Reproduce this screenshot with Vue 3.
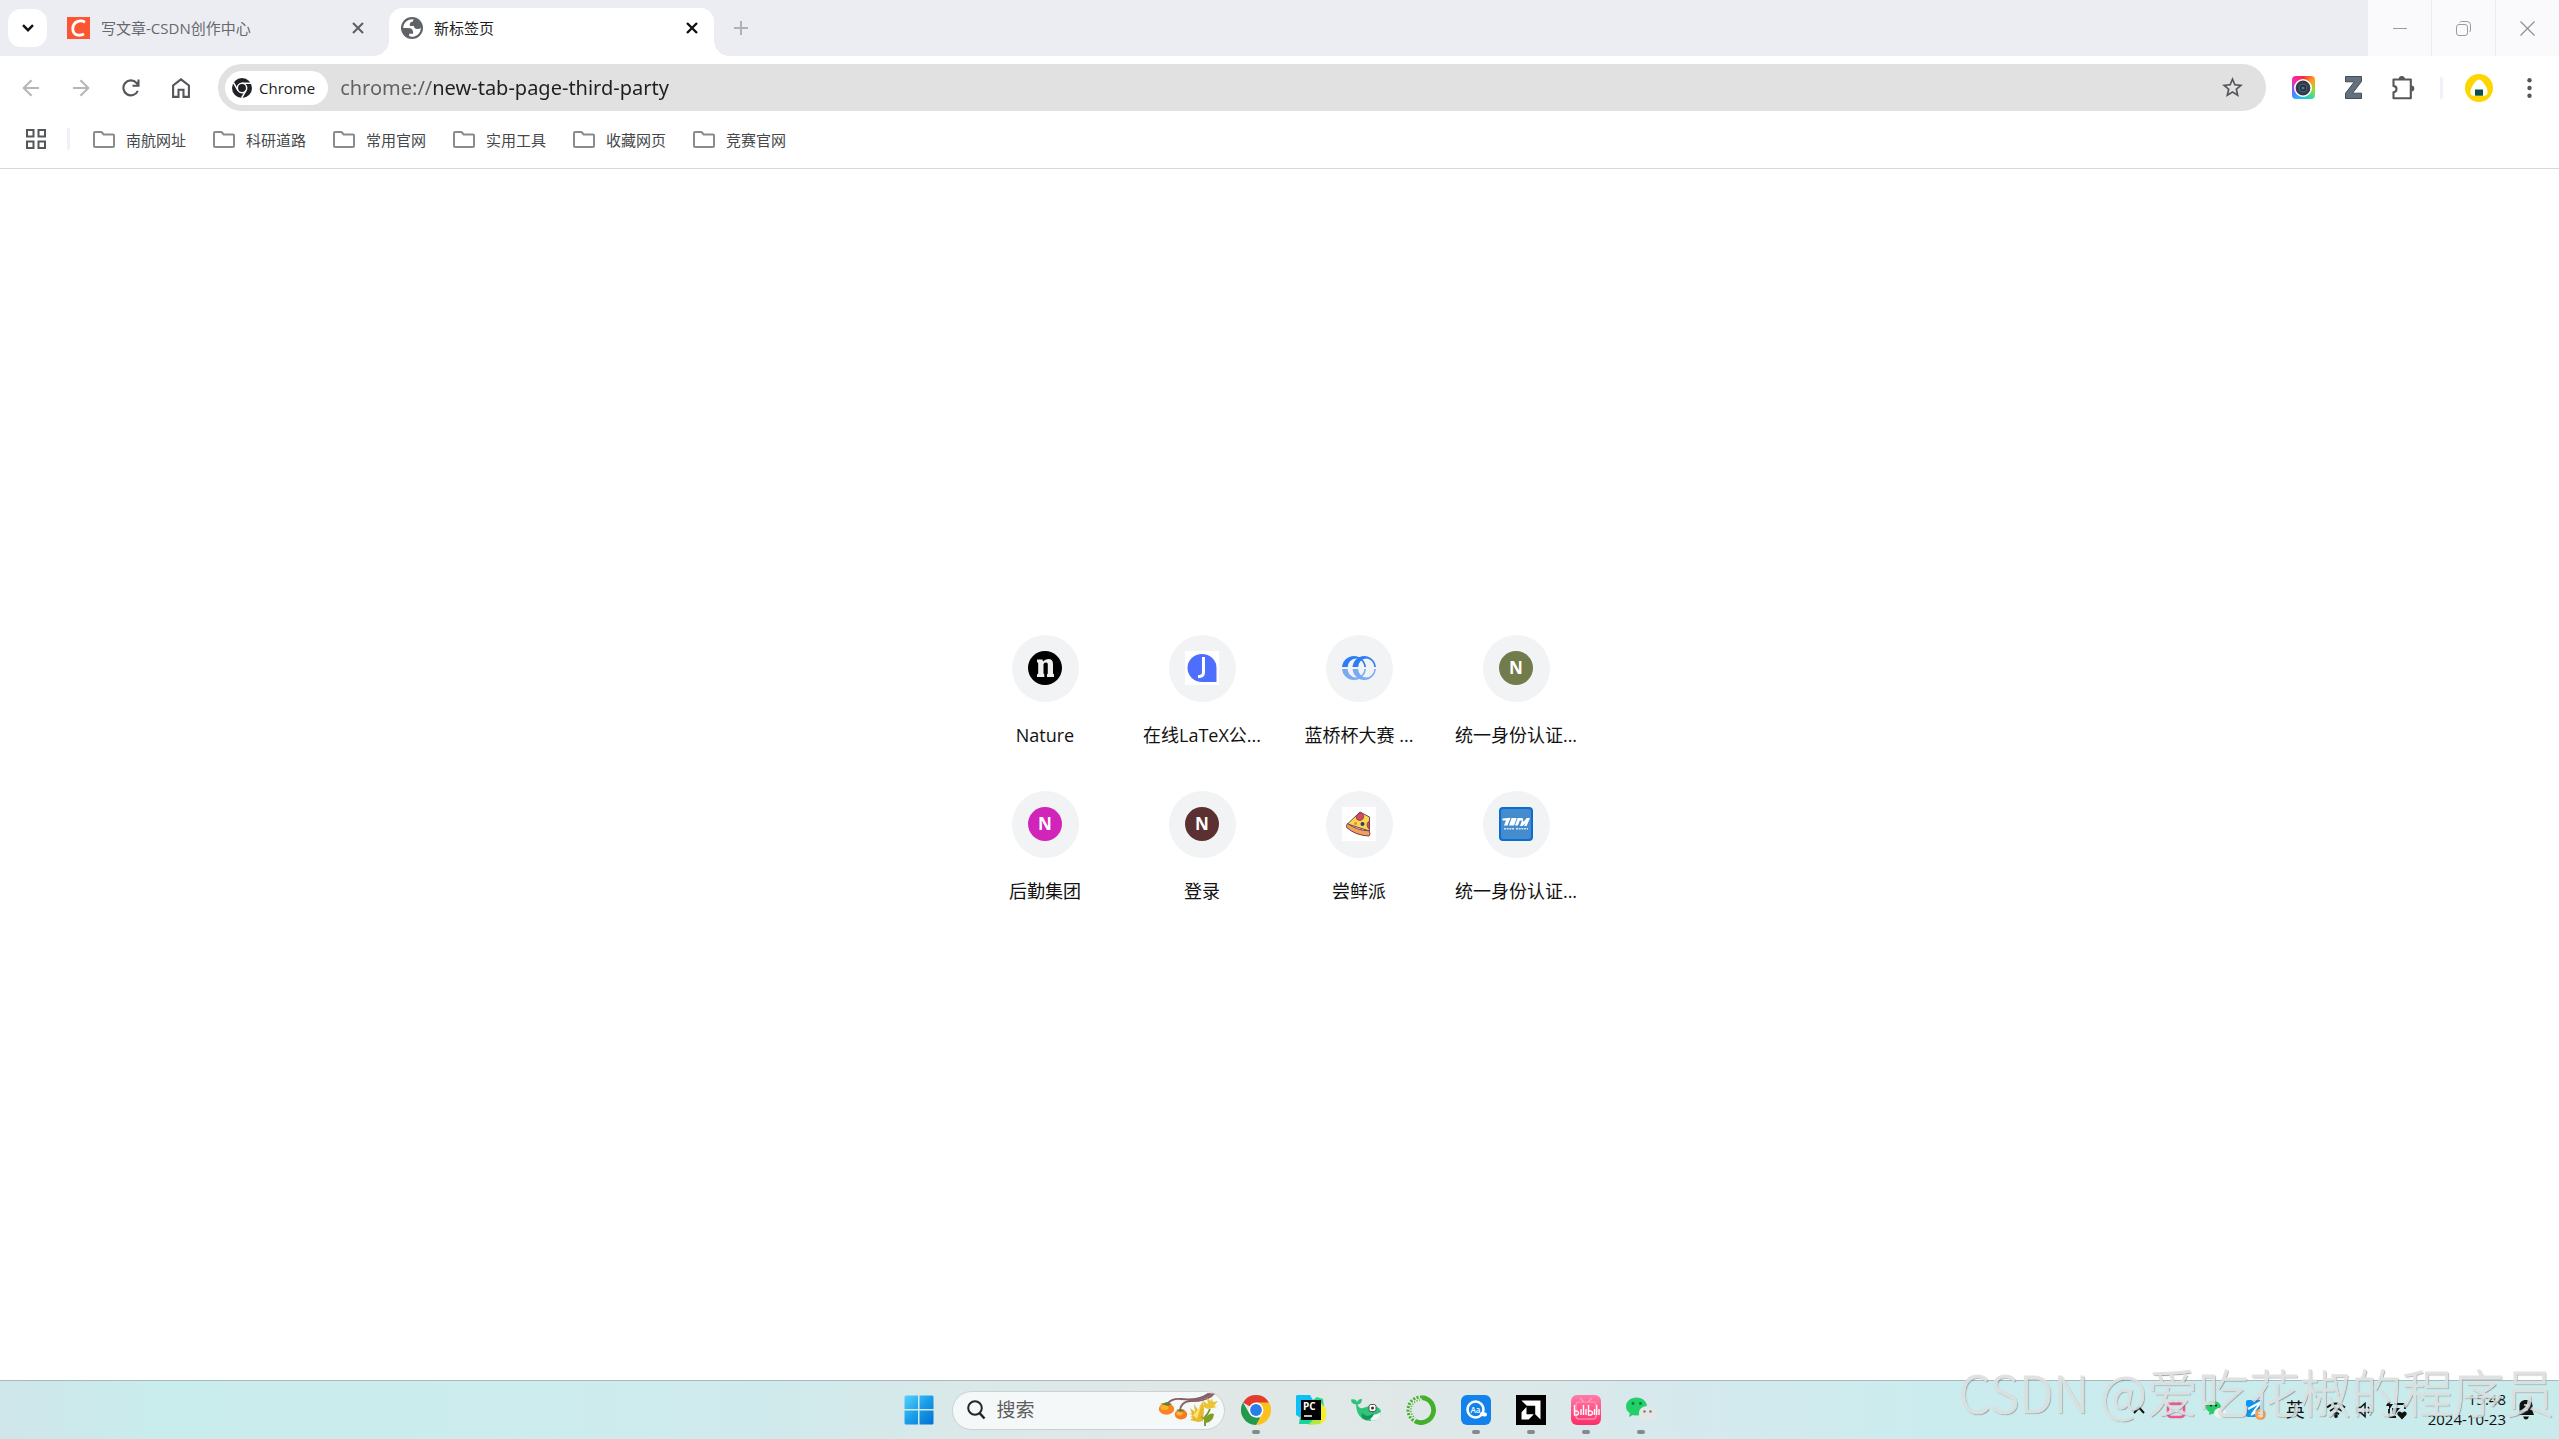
<script setup>
import { ref } from 'vue'

const address = ref('chrome://new-tab-page-third-party')
const folders = ['南航网址', '科研道路', '常用官网', '实用工具', '收藏网页', '竞赛官网']
const shortcuts = [
  { label: 'Nature', icon: 'nature' },
  { label: '在线LaTeX公...', icon: 'latex' },
  { label: '蓝桥杯大赛 ...', icon: 'rings' },
  { label: '统一身份认证...', icon: 'letter', color: '#717b4b' },
  { label: '后勤集团', icon: 'letter', color: '#d025b8' },
  { label: '登录', icon: 'letter', color: '#5b3030' },
  { label: '尝鲜派', icon: 'pizza' },
  { label: '统一身份认证...', icon: 'campus' },
]
</script>

<template>
  <div class="screen">
    <header class="tabstrip">
      <button class="tab-search" aria-label="Search tabs">
        <svg width="12" height="8" viewBox="0 0 12 8"><path d="M1 1.2 6 6.2 11 1.2" fill="none" stroke="#111" stroke-width="2.4" /></svg>
      </button>
      <div class="tab">
        <svg width="23" height="22" viewBox="0 0 23 22">
          <rect width="23" height="22" fill="#fc5531" />
          <path d="M18 5.2C13.500 2.600 6 4.200 5.800 11.700c-.1 6.200 6.200 8 11.200 5.300" fill="none" stroke="#fff" stroke-width="2.800" />
        </svg>
        <span class="tab-title">写文章-CSDN创作中心</span>
        <button class="close" aria-label="Close tab">
          <svg width="12" height="12" viewBox="0 0 12 12"><path d="m1 1 10 10M11 1 1 11" stroke="#5c5e62" stroke-width="2" /></svg>
        </button>
      </div>
      <div class="tab active">
        <svg width="22" height="22" viewBox="2 2 20 20"><circle cx="12" cy="12" r="10" fill="#5f6368" /><path fill="#fff" d="M4 12h4.400c3.407.022 4.922 1.730 4.543 5.127H9.488v2.470a8.004 8.004 0 0 0 10.498-8.083C19.327 12.504 18.332 13 17 13c-2.137 0-3.206-.916-3.206-2.750h-3.748c-.274-2.728.683-4.092 2.870-4.092 0-.975.327-1.597.811-1.970A8.004 8.004 0 0 0 4 12z" /></svg>
        <span class="tab-title">新标签页</span>
        <button class="close" aria-label="Close tab">
          <svg width="12" height="12" viewBox="0 0 12 12"><path d="m1 1 10 10M11 1 1 11" stroke="#111" stroke-width="2.400" /></svg>
        </button>
      </div>
      <button class="new-tab" aria-label="New tab">
        <svg width="14" height="14" viewBox="0 0 14 14"><path d="M7 0v14M0 7h14" stroke="#b0b1b5" stroke-width="2" /></svg>
      </button>
      <div class="window-controls">
        <button aria-label="Minimize"><svg width="14" height="14" viewBox="0 0 14 14"><path d="M0 7.500h14" stroke="#9a9a9c" /></svg></button>
        <button aria-label="Restore"><svg width="15" height="15" viewBox="0 0 15 15" fill="none" stroke="#9a9a9c"><rect x=".5" y="3.500" width="11" height="11" rx="2.500" /><path d="M3.500 1.500q.7-1 2-1H11a3.500 3.500 0 0 1 3.500 3.500v5q0 1.300-1 2" /></svg></button>
        <button aria-label="Close"><svg width="15" height="15" viewBox="0 0 15 15"><path d="m.5.5 14 14M14.500.5l-14 14" stroke="#8f8f91" stroke-width="1.200" /></svg></button>
      </div>
    </header>

    <nav class="toolbar">
      <button class="tool" aria-label="Back"><svg width="18" height="18" viewBox="0 0 18 18"><path d="M17 9H2M9.500 1.200 1.700 9l7.800 7.800" fill="none" stroke="#b6b6b8" stroke-width="2" /></svg></button>
      <button class="tool" aria-label="Forward"><svg width="18" height="18" viewBox="0 0 18 18"><path d="M1 9h15M8.500 1.200 16.300 9l-7.800 7.800" fill="none" stroke="#b6b6b8" stroke-width="2" /></svg></button>
      <button class="tool" aria-label="Reload"><svg width="18" height="18" viewBox="0 0 18 18"><path d="M15.800 11.800A7.500 7.500 0 1 1 14.600 4L16 5.800M16.500.5v6.200h-6" fill="none" stroke="#555659" stroke-width="2.100" /></svg></button>
      <button class="tool" aria-label="Home"><svg width="18" height="20" viewBox="0 0 18 20"><path d="M1.100 18.900V7.500L9 1.300l7.900 6.200v11.400h-5.400v-7.200h-5v7.200z" fill="none" stroke="#555659" stroke-width="2.100" /></svg></button>
      <div class="omnibox">
        <span class="chip">
          <svg width="20" height="20" viewBox="0 0 20 20">
            <circle cx="10" cy="10" r="10" fill="#1f2125" />
            <circle cx="10" cy="10" r="4.700" fill="none" stroke="#fff" stroke-width="1.500" />
            <path d="M10 5.300h9M5.900 12.300 1.500 4.600M14 12.400l-4.400 7.600" stroke="#fff" stroke-width="1.500" />
          </svg>
          Chrome
        </span>
        <input v-model="address" class="address" aria-label="Address" spellcheck="false">
        <button class="star" aria-label="Bookmark this tab"><svg width="25" height="25" viewBox="0 0 24 24"><path fill="#555659" d="M22 9.240l-7.190-.62L12 2 9.190 8.630 2 9.240l5.460 4.730L5.820 21 12 17.270 18.180 21l-1.630-7.030zM12 15.400l-3.760 2.270 1-4.280-3.320-2.880 4.380-.38L12 6.100l1.710 4.040 4.380.38-3.320 2.880 1 4.280z" /></svg></button>
      </div>
      <button class="tool" aria-label="Screenshot extension">
        <span class="camera"><svg width="18" height="18" viewBox="0 0 18 18"><circle cx="9" cy="9" r="8.200" fill="#343b47" stroke="#fff" stroke-width="1.600" /><circle cx="9" cy="9" r="4" fill="#24303e" stroke="#536071" /><circle cx="9" cy="9" r="1.600" fill="#397ea0" /></svg></span>
      </button>
      <button class="tool" aria-label="Zotero"><svg width="17" height="23" viewBox="0 0 17 23"><path d="M.5.500h16v5L7.500 17.200h9v5.300H.5v-5.200L9.300 5.800H.5z" fill="#64717d" stroke="#434d57" /></svg></button>
      <button class="tool" aria-label="Extensions"><svg width="24" height="24" viewBox="0 0 24 24"><path d="M2.500 3.500h17.300v18.800H2.500v-6q3-.4 3-3.200t-3-3.200z" fill="none" stroke="#555659" stroke-width="2.100" stroke-linejoin="round" /><path d="M7.800 3a3 3 0 0 1 6 0zM20.300 9.600a3 3 0 0 1 0 6z" fill="#555659" /></svg></button>
      <span class="divider"></span>
      <button class="tool" aria-label="Profile"><svg width="28" height="28" viewBox="0 0 28 28"><circle cx="14" cy="14" r="14" fill="#ffd500" /><path d="M14 5.500c3.600 0 9.200 9.400 8.600 13.200-.4 2.300-1.700 3-3.600 3H9c-2 0-3.200-.7-3.600-3C4.800 15 10.400 5.500 14 5.500z" fill="#fff" /><path d="M10 15.500h8v6.200h-8z" fill="#075246" /></svg></button>
      <button class="tool" aria-label="Menu"><svg width="5" height="20" viewBox="0 0 5 20" fill="#555659"><circle cx="2.500" cy="2.300" r="2.200" /><circle cx="2.500" cy="10" r="2.200" /><circle cx="2.500" cy="17.700" r="2.200" /></svg></button>
    </nav>

    <nav class="bookmarks">
      <button class="apps" aria-label="Apps"><svg width="20" height="20" viewBox="0 0 20 20" fill="none" stroke="#555659" stroke-width="2"><path d="M1 1h6.500v6.500H1zM12.500 1H19v6.500h-6.500zM1 12.500h6.500V19H1zM12.500 12.500H19V19h-6.500z" /></svg></button>
      <span class="divider"></span>
      <button v-for="name in folders" :key="name" class="folder">
        <svg width="22" height="17" viewBox="0 0 22 17"><path d="M1 15V2q0-1 1-1h6.500l2.200 2.500H20q1 0 1 1V15q0 1-1 1H2q-1 0-1-1z" fill="none" stroke="#8a8b8d" stroke-width="2" /></svg>
        {{ name }}
      </button>
    </nav>

    <main class="page">
      <div class="tiles">
        <a v-for="(s, i) in shortcuts" :key="i" href="#" class="tile">
          <span class="disc">
            <svg width="34" height="34" viewBox="0 0 34 34">
              <template v-if="s.icon === 'nature'">
                <circle cx="17" cy="17" r="17" fill="#000" />
                <path d="M9 8.500h5.500l.5 2q2.200-2.500 5.200-2.500c3.300 0 4.800 1.800 4.800 5v9.500l1 1V26h-7v-2.500l.8-1V13.800c0-1.500-.5-2.200-1.700-2.200-1 0-1.900.5-2.600 1.300v9.600l.8 1V26H9v-2.500l1.200-1V12L9 11z" fill="#eee" />
              </template>
              <template v-else-if="s.icon === 'latex'">
                <rect width="34" height="34" fill="#fff" />
                <path d="M17 3a14.500 14 0 0 1 14.500 14v14H17a14.500 14 0 0 1 0-28z" fill="#4e6eff" />
                <path d="M18.500 6v15.500q0 4-5.500 4.200" fill="none" stroke="#fff" stroke-width="3" />
              </template>
              <template v-else-if="s.icon === 'rings'">
                <defs>
                  <linearGradient id="rings" gradientUnits="userSpaceOnUse" x1="0" y1="4" x2="0" y2="30">
                    <stop offset="0" stop-color="#2f7df2" /><stop offset=".46" stop-color="#2f7df2" />
                    <stop offset=".46" stop-color="#f1f3f4" /><stop offset=".54" stop-color="#f1f3f4" />
                    <stop offset=".54" stop-color="#78aaf5" /><stop offset="1" stop-color="#78aaf5" />
                  </linearGradient>
                </defs>
                <path fill="url(#rings)" fill-rule="evenodd" d="M0 17a12 12 0 0 1 24 0a12 12 0 0 1-24 0zM5.500 17a8.500 9.500 0 0 0 17 0a8.500 9.500 0 0 0-17 0z" />
                <path fill="url(#rings)" fill-rule="evenodd" d="M10.500 17a11.700 12 0 0 1 23.400 0a11.700 12 0 0 1-23.400 0zM16 17a8.200 9.500 0 0 0 16.400 0a8.200 9.500 0 0 0-16.400 0z" />
              </template>
              <template v-else-if="s.icon === 'letter'">
                <circle cx="17" cy="17" r="17" :fill="s.color" />
                <text x="17" y="23" text-anchor="middle" class="initial">N</text>
              </template>
              <template v-else-if="s.icon === 'pizza'">
                <rect width="34" height="34" fill="#fff" />
                <path d="M5.500 17 18 5l9.500 5v14z" fill="#fbd64d" stroke="#70405c" />
                <path d="M14 9.500Q18 3 21.500 8q1 4.500-3.500 5.500-4 0-4-4zM27.500 14q-4 2-1.500 7l1.500 1z" fill="#d9485c" stroke="#70405c" stroke-width=".8" />
                <path d="M5.500 16.500Q15 23.500 27 23.800q2 2.700 0 5.200Q14 28.500 4.800 20.700q-.8-2.700.7-4.200z" fill="#f2a057" stroke="#70405c" />
                <circle cx="20.500" cy="17" r="2" fill="#333d66" />
                <circle cx="13.500" cy="16.500" r="1.500" fill="#e8883c" />
              </template>
              <template v-else>
                <rect x="1" y="1" width="32" height="32" rx="3" fill="#448ccb" stroke="#0b6dcf" stroke-width="2" />
                <path d="m3.500 11.500 8-.7-3 7.700H5l2-5H3.500zM12.500 11h5.300l-2.800 7.500h-5zM18.700 11h5l-1 2.500-2 .2-1.800 4.800H16zM23.800 11l.6 4 3.300-4H31l-3.400 8h-2.500l1.400-3-3 3H21z" fill="#fff" />
                <path d="M5 21.700h10M17 21.700h12" stroke="#d5e6f5" stroke-width="1.600" stroke-dasharray="2 .7" />
              </template>
            </svg>
          </span>
          <span class="tile-label">{{ s.label }}</span>
        </a>
      </div>
    </main>

    <footer class="taskbar">
      <div class="dock">
        <button class="app" aria-label="Start">
          <svg width="30" height="30" viewBox="0 0 30 30">
            <defs><linearGradient id="win" x1="0" y1="0" x2="1" y2="1"><stop offset="0" stop-color="#56d2ff" /><stop offset=".5" stop-color="#1a9de8" /><stop offset="1" stop-color="#0070d2" /></linearGradient></defs>
            <path d="M2 .5h12V14H.5V2Q.5.5 2 .5zM15.500.5H28q1.500 0 1.500 1.500v12h-14zM.5 15.500H14v14H2Q.5 29.500.5 28zM15.500 15.500h14V28q0 1.500-1.500 1.500H15.500z" fill="url(#win)" />
          </svg>
        </button>
        <label class="search">
          <svg width="19" height="20" viewBox="0 0 19 20"><circle cx="8" cy="8" r="6.800" fill="none" stroke="#252525" stroke-width="2" /><path d="m12.500 13 5 5.500" stroke="#252525" stroke-width="2.600" /></svg>
          <input type="search" placeholder="搜索" aria-label="搜索">
          <svg width="60" height="34" viewBox="0 0 60 34">
            <path d="M9 11Q14 5 23 6q17 2 27-5l5 .5-2 2Q44 9 32 8 23 9 22 17" fill="none" stroke="#896068" stroke-width="1.800" />
            <path d="M30 6q11 0 20-5.500l5 .8-2 1.500Q43 8.500 31 8z" fill="#896068" />
            <ellipse cx="8.500" cy="16" rx="7.700" ry="5.800" fill="#f98420" /><ellipse cx="6.500" cy="14.500" rx="4" ry="2.500" fill="#ffb12e" />
            <path d="m2 11 4-1 3-1 5 2-4 2-3-1z" fill="#66802d" />
            <ellipse cx="23" cy="21.500" rx="6.200" ry="5" fill="#f97920" /><ellipse cx="21.500" cy="20.500" rx="3.200" ry="2" fill="#ffb13b" />
            <path d="m18 17 4-1 5 1-4 2z" fill="#66802d" />
            <path d="m31 20 3 1-2-6 5 4-1-8 4 6 5-9 1 8-1 12-5 1-8-2 3-2-3-1 3-1z" fill="#e6b82f" /><path d="m35 22 8-9-4 13z" fill="#ffe36a" />
            <path d="m45 8 5 3-1-6 4 3 1-3 1 4 5-1-4 5 3 1-9 2-9-4h5z" fill="#ecc332" />
            <path d="M52 16q-2 5-5 8v9" fill="none" stroke="#6f9327" stroke-width="1.800" />
            <path d="M47 25q5-6 9-4-1 8-8 9 0-2-4-5l-1-2z" fill="#7c9e24" />
          </svg>
        </label>
        <button class="app running" aria-label="Chrome">
          <svg width="30" height="30" viewBox="0 0 30 30">
            <path d="M15 15 2 7.500A15 15 0 0 1 28 7.500z" fill="#e33b2e" />
            <path d="M15 7.500h13A15 15 0 0 1 15 30l6.500-11.300z" fill="#fcc21b" />
            <path d="M2 7.500 8.500 18.700 15 22.500h4.300L15 30A15 15 0 0 1 2 7.500z" fill="#229a4b" />
            <circle cx="15" cy="15" r="7.400" fill="#fff" /><circle cx="15" cy="15" r="5.900" fill="#2b7de9" />
          </svg>
        </button>
        <button class="app" aria-label="PyCharm">
          <svg width="30" height="30" viewBox="0 0 30 30">
            <path d="M1 0h13l3 5-3 14-9 4-5-3V1z" fill="#10c0f5" /><path d="m17 5 4-3 6 2 1 8-9 5z" fill="#21d789" />
            <path d="m25 8 5 6v10l-5 5-17-5z" fill="#f3ef2a" /><path d="M4 21 14 22l10 3-8 4H3z" fill="#17d5a0" /><path d="m17 25 8 0-1 4-12 1z" fill="#b4e83e" />
            <rect x="5" y="5" width="20" height="20" /><text x="7" y="14.500" class="pc">PC</text><path d="M8 21h8" stroke="#fff" stroke-width="1.500" />
          </svg>
        </button>
        <button class="app" aria-label="Whale">
          <svg width="30" height="30" viewBox="0 0 30 30">
            <path d="M0 4.500Q5 3.500 6 7q1.500-3.500 5-3 0 5-4.500 5.500Q8 14 12 13q4-1.500 7-2 6-.5 9 2 3 2.500 1.500 7-2 6-9.500 6-10 0-13.500-8.500Q5 13 5 9.500 0 9 0 4.500z" fill="#2fc47a" />
            <path d="M29.900 17q.3 8.500-9.400 9-2.500-3.500.5-6 5 0 8.900-3z" fill="#f2f5f3" /><path d="M11 18q5 6 12 0-1 6-8 7-6-2-4-7z" fill="#15975b" />
            <rect x="18" y="9.500" width="7" height="7" rx="2" fill="#fff" stroke="#555" /><circle cx="21.500" cy="13" r="1.500" fill="#333" />
          </svg>
        </button>
        <button class="app" aria-label="Anaconda">
          <svg width="30" height="30" viewBox="0 0 30 30" fill="none" stroke="#43b02a">
            <path d="M16 2.600A12.500 12.500 0 1 1 9 26" stroke-width="4.800" />
            <path d="M16 2A13 13 0 0 0 9 26.500" stroke-width="3" stroke-dasharray="2 1.500" /><path d="M14 5A10 10 0 0 0 9 23" stroke-width="1.500" stroke-dasharray="1 1.600" />
          </svg>
        </button>
        <button class="app running" aria-label="Dictionary">
          <svg width="30" height="30" viewBox="0 0 30 30">
            <rect width="30" height="30" rx="6" fill="#1283ec" /><circle cx="14.500" cy="14.500" r="8" fill="none" stroke="#fff" stroke-width="2.600" />
            <path d="m21 19 3 .5" stroke="#fff" stroke-width="4" stroke-linecap="round" /><text x="14.500" y="17.500" text-anchor="middle" class="aa">Aa</text>
          </svg>
        </button>
        <button class="app running" aria-label="AMD Software">
          <svg width="30" height="30" viewBox="0 0 30 30"><rect width="30" height="30" /><path d="M5.500 5.500h19v19l-5.300-5.300v-8.400h-8.400zM10.500 12v7.300h7.300L12.700 24.500H5.500v-7.300z" fill="#fff" /></svg>
        </button>
        <button class="app running" aria-label="bilibili">
          <svg width="30" height="30" viewBox="0 0 30 30">
            <defs><linearGradient id="bili" x1="0" y1="0" x2="0" y2="1"><stop offset="0" stop-color="#ff7ba7" /><stop offset="1" stop-color="#ff2d69" /></linearGradient></defs>
            <rect width="30" height="30" rx="6" fill="url(#bili)" /><path d="m9 3 4 4M21 3l-4 4" stroke="#ff9cbc" stroke-width="1.500" /><rect x="5" y="7" width="20" height="17" rx="3" fill="none" stroke="#ff8bb0" stroke-width="1.500" />
            <g fill="none" stroke="#fff" stroke-width="1.400"><path d="M3.500 10v10q4 .5 4-2t-3.500-2M10 14v6M12.500 10v10M15 14v6M17.500 10v10q4 .5 4-2t-3.500-2M23.500 14v6M25.700 10v10M28 14v6" /></g>
          </svg>
        </button>
        <button class="app running" aria-label="WeChat">
          <svg width="30" height="30" viewBox="0 0 30 30">
            <path d="M10.500 2.500c6 0 10.500 4 10.500 9s-4.500 9-10.500 9q-2 0-3.500-.6L3 22l.8-4Q0 15.500 0 11.500c0-5 4.500-9 10.500-9z" fill="#22cf68" />
            <circle cx="7" cy="8.500" r="1.400" fill="#0b7a3a" /><circle cx="14.500" cy="8.500" r="1.400" fill="#0b7a3a" />
            <path d="M21.500 11c4.800 0 8.500 3.200 8.500 7.200q0 3-2.500 5l.5 3-3-1.500q-1.500.6-3.500.6c-4.800 0-8.500-3-8.500-7.100s3.700-7.200 8.500-7.200z" fill="#e6e6e6" />
            <circle cx="18.500" cy="16.500" r="1.200" fill="#777" /><circle cx="24.500" cy="16.500" r="1.200" fill="#777" />
          </svg>
        </button>
      </div>
      <div class="tray">
        <svg width="14" height="20" viewBox="0 0 14 20"><path d="m2 13 5-5.500L12 13" fill="none" stroke="#111" stroke-width="2" /></svg>
        <svg width="20" height="20" viewBox="0 0 20 20" fill="none" stroke="#f0568d" stroke-width="2.600"><path d="m6 1 3 3M14 1l-3 3M7 9v4M13 9v4" /><rect x="2" y="4" width="16" height="13" rx="3" /></svg>
        <svg width="20" height="20" viewBox="0 0 20 20"><path d="M7.500 1c4 0 7.500 2.700 7.500 6s-3.500 6.500-7.500 6.500L3 15l.5-3Q0 10 0 7c0-3.500 3.500-6 7.500-6z" fill="#25ce68" /><ellipse cx="14" cy="13" rx="6" ry="5" fill="#f2f2f2" /><circle cx="5" cy="5.500" r="1" /><circle cx="10" cy="5.500" r="1" /></svg>
        <svg width="20" height="20" viewBox="0 0 20 20"><rect width="17" height="17" rx="2" fill="#0b96f5" /><path d="M2 9 15 2 6 14M5 15l9-5" stroke="#fff" stroke-width="2" fill="none" /><circle cx="14.500" cy="14.500" r="5.500" fill="#f8a052" /><path d="M12 13h5M12 16h5" stroke="#fff" /></svg>
        <span class="ime">英</span>
        <div class="status">
          <svg width="20" height="20" viewBox="0 0 20 20" fill="none" stroke="#111" stroke-width="1.800"><path d="M1 7.500q9-8 18 0M4 11q6-5 12 0M7 14.200q3-2.400 6 0" /><circle cx="10" cy="16" r="1" fill="#111" /></svg>
          <svg width="20" height="20" viewBox="0 0 20 20" fill="none" stroke="#111" stroke-width="1.500"><path d="M1 7.500h3.500L9 3.500v13l-4.500-4H1zM12 7q2.500 3 0 6" /><path d="M14 4q5 6 0 12" stroke="#9aa" /></svg>
          <svg width="22" height="20" viewBox="0 0 22 20"><path d="M8 4h9q2 0 2 2v3M3 9v6q0 2 2 2h5" fill="none" stroke="#111" stroke-width="1.800" /><path d="M3 0 0 6h3v4l4-6H4zM6 8h8l-5 6H6zM16 19.500l-4.500-4.800q-.8-2.500 1.700-3.200 2-.2 2.800 1.500.8-1.700 2.800-1.500 2.500.7 1.700 3.200z" fill="#111" /></svg>
        </div>
        <time class="clock" datetime="2024-10-23T15:48">15:48<br>2024-10-23</time>
        <svg width="16" height="20" viewBox="0 0 16 20"><path d="M8 0c4.500 0 6.500 2.500 6.500 6v5l1.500 4H0l1.500-4V6C1.500 2.500 3.500 0 8 0zM5 16.500h6q-1 3-3 3t-3-3z" fill="#111" /><path d="M6 5h4l-4 5h4" fill="none" stroke="#cdeaec" stroke-width="1.400" /></svg>
      </div>
    </footer>
    <div class="watermark">CSDN @爱吃花椒的程序员</div>
  </div>
</template>

<style>
html, body { margin: 0; background: #fff; }
</style>

<style scoped>
.screen { position: relative; display: flex; flex-direction: column; min-height: 100vh; overflow: hidden; background: #fff; color: #1f1f1f; font-family: "Open Sans", "Noto Sans CJK SC", sans-serif; font-size: 15px; }
* { box-sizing: border-box; }
svg { display: block; flex: none; }
button { display: flex; align-items: center; justify-content: center; margin: 0; padding: 0; border: 0; background: none; color: inherit; font: inherit; flex: none; }
input { min-width: 0; padding: 0; border: 0; outline: 0; background: none; font: inherit; }

.tabstrip { display: flex; align-items: flex-end; height: 56px; padding-left: 8px; background: #ecedf3; }
.tab-search { align-self: center; width: 39px; height: 38px; border-radius: 13px; background: #fff; }
.tab { display: flex; align-items: center; width: 325px; height: 48px; padding: 0 16px 8px 12px; margin-left: 9px; color: #66686c; }
.tab:first-of-type { margin-left: 8px; }
.tab-title { flex: 1; margin-left: 11px; line-height: 20px; }
.tab.active { position: relative; margin-left: 9px; border-radius: 14px 14px 0 0; background: #fff; color: #1f1f1f; }
.tab.active::before, .tab.active::after { content: ""; position: absolute; bottom: 0; width: 16px; height: 16px; }
.tab.active::before { left: -16px; background: radial-gradient(circle at 0 0, transparent 16px, #fff 16px); }
.tab.active::after { right: -16px; background: radial-gradient(circle at 100% 0, transparent 16px, #fff 16px); }
.new-tab { width: 54px; height: 56px; }
.window-controls { display: flex; gap: 1px; margin-left: auto; }
.window-controls button { width: 63px; height: 56px; background: #fafafd; }

.toolbar { display: flex; align-items: center; padding: 8px 5px 8px 6px; }
.tool { width: 50px; height: 47px; }
.omnibox { display: flex; align-items: center; flex: 1; height: 47px; margin: 0 12px; padding: 0 21px 0 7px; border-radius: 24px; background: #e1e1e1; }
.chip { display: flex; align-items: center; gap: 7px; height: 34px; padding: 0 13px 0 7px; border-radius: 17px; background: #fff; font-size: 15px; }
.address { flex: 1; height: 32px; margin-left: 12px; font-family: "Noto Sans", "Noto Sans CJK SC", sans-serif; font-size: 20px; color: transparent; background: linear-gradient(90deg, #5f6063 93px, #1f1f1f 93px); background-clip: text; -webkit-background-clip: text; }
.camera { display: flex; align-items: center; justify-content: center; width: 23px; height: 23px; border-radius: 4px; background: conic-gradient(#f32b3c, #ff9d1c, #9bdc3a, #22d6c0, #25b6ff, #7a5cff, #ff25a8, #f32b3c); }
.divider { flex: none; width: 3px; height: 22px; margin: 0 11px 0 12px; border-radius: 1px; background: #f0f0f8; }

.bookmarks { display: flex; align-items: center; gap: 27px; padding: 8px 26px 17px; border-bottom: 1px solid #d8d8d8; }
.bookmarks .divider { margin: 0 -4px 0 -6px; }
.folder { gap: 11px; height: 24px; color: #45474a; }

.page { display: flex; flex: 1; align-items: center; justify-content: center; padding-left: 2px; }
.tiles { display: grid; grid-template-columns: repeat(4, 157px); }
.tile { display: flex; flex-direction: column; align-items: center; height: 156px; padding-top: 16px; color: #1f1f1f; text-decoration: none; }
.disc { display: flex; align-items: center; justify-content: center; width: 67px; height: 67px; border-radius: 50%; background: #f1f3f4; }
.tile-label { margin-top: 19px; font-size: 18px; line-height: 28px; color: #111; white-space: nowrap; }
.initial { fill: #fff; font-size: 17px; font-weight: 700; }

.taskbar { display: flex; align-items: center; justify-content: center; position: relative; height: 59px; border-top: 1px solid #a9b8ba; background: linear-gradient(90deg, #cfe6ea 0, #c9ecec 6%, #ccecee 20%, #d0eaec 31%, #dce8e8 39%, #e1e7e7 47%, #dfe8e8 57%, #d6e9ed 65%, #caecee 76%, #caebec 100%); }
.dock { display: flex; align-items: center; gap: 25px; }
.app { position: relative; width: 30px; height: 30px; }
.running::after { content: ""; position: absolute; left: 11px; bottom: -9px; width: 8px; height: 4px; border-radius: 2px; background: #858989; }
.search { display: flex; align-items: center; width: 273px; height: 39px; margin: 0 -9px 0 -7px; padding: 0 6px 0 14px; border: 1px solid #c9d2d3; border-radius: 20px; background: #f4f8f9; }
.search input { flex: 1; margin-left: 11px; font-size: 19px; color: #555; }
.search input::placeholder { color: #5d5f60; opacity: 1; }
.pc { fill: #fff; font-size: 10px; font-weight: 700; }
.aa { fill: #fff; font-size: 8px; font-weight: 600; }
.tray { position: absolute; right: 25px; top: 0; bottom: 0; display: flex; align-items: center; gap: 20px; color: #111; }
.ime { width: 20px; font-size: 19px; line-height: 24px; }
.status { display: flex; gap: 10px; }
.clock { margin-right: -8px; padding-bottom: 2px; text-align: right; font-size: 15px; line-height: 20px; }
.watermark { position: absolute; right: 4px; bottom: 12px; color: #dcdfdf; -webkit-text-stroke: 1px #dcdfdf; opacity: .88; font-family: "Noto Sans CJK SC", sans-serif; font-size: 51px; font-weight: 300; line-height: 72px; white-space: nowrap; text-shadow: 1px 1px 1px rgba(90, 100, 100, .7); pointer-events: none; }
</style>
